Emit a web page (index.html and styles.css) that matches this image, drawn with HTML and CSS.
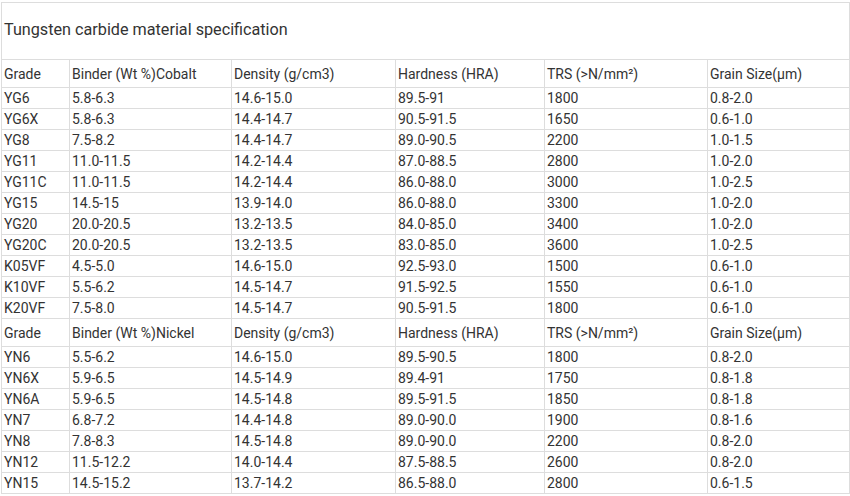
FILE: index.html
```html
<!DOCTYPE html>
<html>
<head>
<meta charset="utf-8">
<link rel="stylesheet" href="styles.css">
</head>
<body>
<table class="spec">
  <colgroup>
    <col class="c1"><col class="c2"><col class="c3"><col class="c4"><col class="c5"><col class="c6">
  </colgroup>
  <tr class="title-row"><td colspan="6">Tungsten carbide material specification</td></tr>
  <tr class="head"><td>Grade</td><td>Binder (Wt %)Cobalt</td><td>Density (g/cm3)</td><td>Hardness (HRA)</td><td>TRS (&gt;N/mm²)</td><td>Grain Size(μm)</td></tr>
  <tr><td>YG6</td><td>5.8-6.3</td><td>14.6-15.0</td><td>89.5-91</td><td>1800</td><td>0.8-2.0</td></tr>
  <tr><td>YG6X</td><td>5.8-6.3</td><td>14.4-14.7</td><td>90.5-91.5</td><td>1650</td><td>0.6-1.0</td></tr>
  <tr><td>YG8</td><td>7.5-8.2</td><td>14.4-14.7</td><td>89.0-90.5</td><td>2200</td><td>1.0-1.5</td></tr>
  <tr><td>YG11</td><td>11.0-11.5</td><td>14.2-14.4</td><td>87.0-88.5</td><td>2800</td><td>1.0-2.0</td></tr>
  <tr><td>YG11C</td><td>11.0-11.5</td><td>14.2-14.4</td><td>86.0-88.0</td><td>3000</td><td>1.0-2.5</td></tr>
  <tr><td>YG15</td><td>14.5-15</td><td>13.9-14.0</td><td>86.0-88.0</td><td>3300</td><td>1.0-2.0</td></tr>
  <tr><td>YG20</td><td>20.0-20.5</td><td>13.2-13.5</td><td>84.0-85.0</td><td>3400</td><td>1.0-2.0</td></tr>
  <tr><td>YG20C</td><td>20.0-20.5</td><td>13.2-13.5</td><td>83.0-85.0</td><td>3600</td><td>1.0-2.5</td></tr>
  <tr><td>K05VF</td><td>4.5-5.0</td><td>14.6-15.0</td><td>92.5-93.0</td><td>1500</td><td>0.6-1.0</td></tr>
  <tr><td>K10VF</td><td>5.5-6.2</td><td>14.5-14.7</td><td>91.5-92.5</td><td>1550</td><td>0.6-1.0</td></tr>
  <tr><td>K20VF</td><td>7.5-8.0</td><td>14.5-14.7</td><td>90.5-91.5</td><td>1800</td><td>0.6-1.0</td></tr>
  <tr class="head"><td>Grade</td><td>Binder (Wt %)Nickel</td><td>Density (g/cm3)</td><td>Hardness (HRA)</td><td>TRS (&gt;N/mm²)</td><td>Grain Size(μm)</td></tr>
  <tr><td>YN6</td><td>5.5-6.2</td><td>14.6-15.0</td><td>89.5-90.5</td><td>1800</td><td>0.8-2.0</td></tr>
  <tr><td>YN6X</td><td>5.9-6.5</td><td>14.5-14.9</td><td>89.4-91</td><td>1750</td><td>0.8-1.8</td></tr>
  <tr><td>YN6A</td><td>5.9-6.5</td><td>14.5-14.8</td><td>89.5-91.5</td><td>1850</td><td>0.8-1.8</td></tr>
  <tr><td>YN7</td><td>6.8-7.2</td><td>14.4-14.8</td><td>89.0-90.0</td><td>1900</td><td>0.8-1.6</td></tr>
  <tr><td>YN8</td><td>7.8-8.3</td><td>14.5-14.8</td><td>89.0-90.0</td><td>2200</td><td>0.8-2.0</td></tr>
  <tr><td>YN12</td><td>11.5-12.2</td><td>14.0-14.4</td><td>87.5-88.5</td><td>2600</td><td>0.8-2.0</td></tr>
  <tr><td>YN15</td><td>14.5-15.2</td><td>13.7-14.2</td><td>86.5-88.0</td><td>2800</td><td>0.6-1.5</td></tr>
</table>
</body>
</html>
```
FILE: styles.css
```css
html, body {
  margin: 0;
  padding: 0;
  background: #fff;
}
body {
  padding: 2px 0 0 1px;
  font-family: Roboto, "Liberation Sans", sans-serif;
  color: #333;
}
.spec {
  border-collapse: separate;
  border-spacing: 0;
  table-layout: fixed;
  width: 849px;
  border-top: 1px solid #ddd;
  border-left: 1px solid #ddd;
  font-size: 14px;
}
.spec td {
  border-right: 1px solid #ddd;
  border-bottom: 1px solid #ddd;
  padding: 0 0 0 2px;
  height: 20px;
  line-height: 20px;
  vertical-align: middle;
  white-space: nowrap;
  overflow: hidden;
}
.spec tr.head td {
  height: 27px;
}
.spec tr.title-row td {
  height: 54px;
  padding-bottom: 2px;
  font-size: 16.2px;
  padding-left: 2px;
}
.c1 { width: 68px; }
.c2 { width: 162px; }
.c3 { width: 164px; }
.c4 { width: 149px; }
.c5 { width: 163px; }
.c6 { width: 142px; }
```
